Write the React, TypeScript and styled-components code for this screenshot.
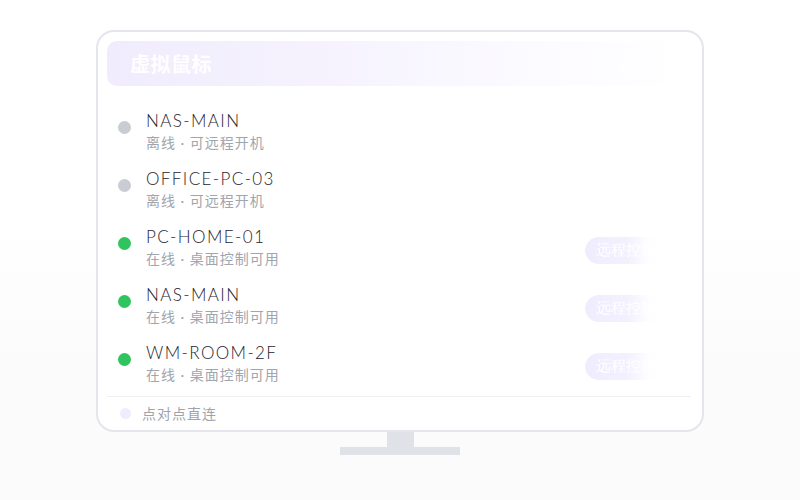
import React from "react";
import styled, { createGlobalStyle } from "styled-components";

const GlobalStyle = createGlobalStyle`
  html, body {
    margin: 0;
    padding: 0;
  }
  body {
    background: linear-gradient(180deg, #ffffff 0%, #ffffff 44%, #fbfbfc 72%, #fbfbfc 100%);
    min-height: 500px;
    font-family: "Lato", "Noto Sans CJK SC", sans-serif;
  }
`;

const Stage = styled.div`
  height: 500px;
  display: flex;
  flex-direction: column;
  align-items: center;
  padding-top: 30px;
  box-sizing: border-box;
`;

const Screen = styled.div`
  width: 608px;
  height: 402px;
  box-sizing: border-box;
  border: 2px solid #e4e6eb;
  border-radius: 18px;
  background: #ffffff;
  padding: 9px 11px 0 9px;
  display: flex;
  flex-direction: column;
  overflow: hidden;
`;

const Header = styled.div`
  height: 45px;
  flex: none;
  border-radius: 10px;
  background: linear-gradient(90deg, #f0ecfd 0%, #f6f3fe 40%, #fbfaff 70%, #ffffff 100%);
  display: flex;
  align-items: center;
  justify-content: space-between;
  padding: 0 22px 0 23px;
`;

const Title = styled.span`
  font-family: "Noto Sans CJK SC", sans-serif;
  font-size: 20px;
  font-weight: 700;
  color: #ffffff;
  letter-spacing: 0.5px;
`;

const HeaderHint = styled.span`
  font-family: "Noto Sans CJK SC", sans-serif;
  font-size: 13px;
  color: #ffffff;
`;

const List = styled.div`
  flex: none;
  padding-top: 18px;
  display: flex;
  flex-direction: column;
`;

const Row = styled.div`
  height: 58px;
  display: flex;
  align-items: flex-start;
  padding: 5px 0 0 11px;
  box-sizing: border-box;
`;

const Dot = styled.span<{ $online: boolean }>`
  width: 13px;
  height: 13px;
  border-radius: 50%;
  flex: none;
  margin-top: 12px;
  background: ${(p) => (p.$online ? "#2fc55e" : "#c9ccd3")};
`;

const Info = styled.div`
  display: flex;
  flex-direction: column;
  margin-left: 15px;
  flex: 1;
`;

const Name = styled.span`
  font-family: "Lato", "Noto Sans CJK SC", sans-serif;
  font-size: 17px;
  font-weight: 300;
  line-height: 24px;
  color: #1f232a;
  letter-spacing: 1.4px;
`;

const Sub = styled.span`
  font-family: "Lato", "Noto Sans CJK SC", sans-serif;
  font-size: 14px;
  line-height: 20px;
  color: #a0a5ae;
  letter-spacing: 1px;
`;

const ControlButton = styled.button`
  align-self: center;
  margin: -2px 16px 0 0;
  width: 90px;
  height: 27px;
  border: none;
  border-radius: 14px;
  padding: 0 0 0 11px;
  text-align: left;
  background: linear-gradient(90deg, #efecfe 0%, #f3f0fe 45%, #fdfcff 75%, #ffffff 90%);
  color: #ffffff;
  font-family: serif;
  font-size: 15px;
  -webkit-mask-image: linear-gradient(90deg, #000 55%, transparent 85%);
  mask-image: linear-gradient(90deg, #000 55%, transparent 85%);
`;

const Divider = styled.div`
  height: 1px;
  background: #eef0f3;
  margin-top: 2px;
  flex: none;
`;

const Footer = styled.div`
  height: 32px;
  display: flex;
  align-items: center;
  padding-left: 13px;
  gap: 11px;
`;

const FooterDot = styled.span`
  width: 11px;
  height: 11px;
  border-radius: 50%;
  background: #efedfd;
`;

const FooterText = styled.span`
  font-family: "Noto Sans CJK SC", sans-serif;
  font-size: 14px;
  color: #9ea3ac;
  letter-spacing: 1px;
`;

const Neck = styled.div`
  width: 27px;
  height: 15px;
  background: #dfe3e8;
`;

const Base = styled.div`
  width: 120px;
  height: 8px;
  background: #dfe3e8;
`;

const devices = [
  { name: "NAS-MAIN", online: false },
  { name: "OFFICE-PC-03", online: false },
  { name: "PC-HOME-01", online: true },
  { name: "NAS-MAIN", online: true },
  { name: "WM-ROOM-2F", online: true },
];

export default function App() {
  return (
    <>
      <GlobalStyle />
      <Stage>
        <Screen>
          <Header>
            <Title>虚拟鼠标</Title>
            <HeaderHint>全部设备</HeaderHint>
          </Header>
          <List>
            {devices.map((d, i) => (
              <Row key={i}>
                <Dot $online={d.online} />
                <Info>
                  <Name>{d.name}</Name>
                  <Sub>{d.online ? "在线 · 桌面控制可用" : "离线 · 可远程开机"}</Sub>
                </Info>
                {d.online && <ControlButton>远程控制</ControlButton>}
              </Row>
            ))}
          </List>
          <Divider />
          <Footer>
            <FooterDot />
            <FooterText>点对点直连</FooterText>
          </Footer>
        </Screen>
        <Neck />
        <Base />
      </Stage>
    </>
  );
}
